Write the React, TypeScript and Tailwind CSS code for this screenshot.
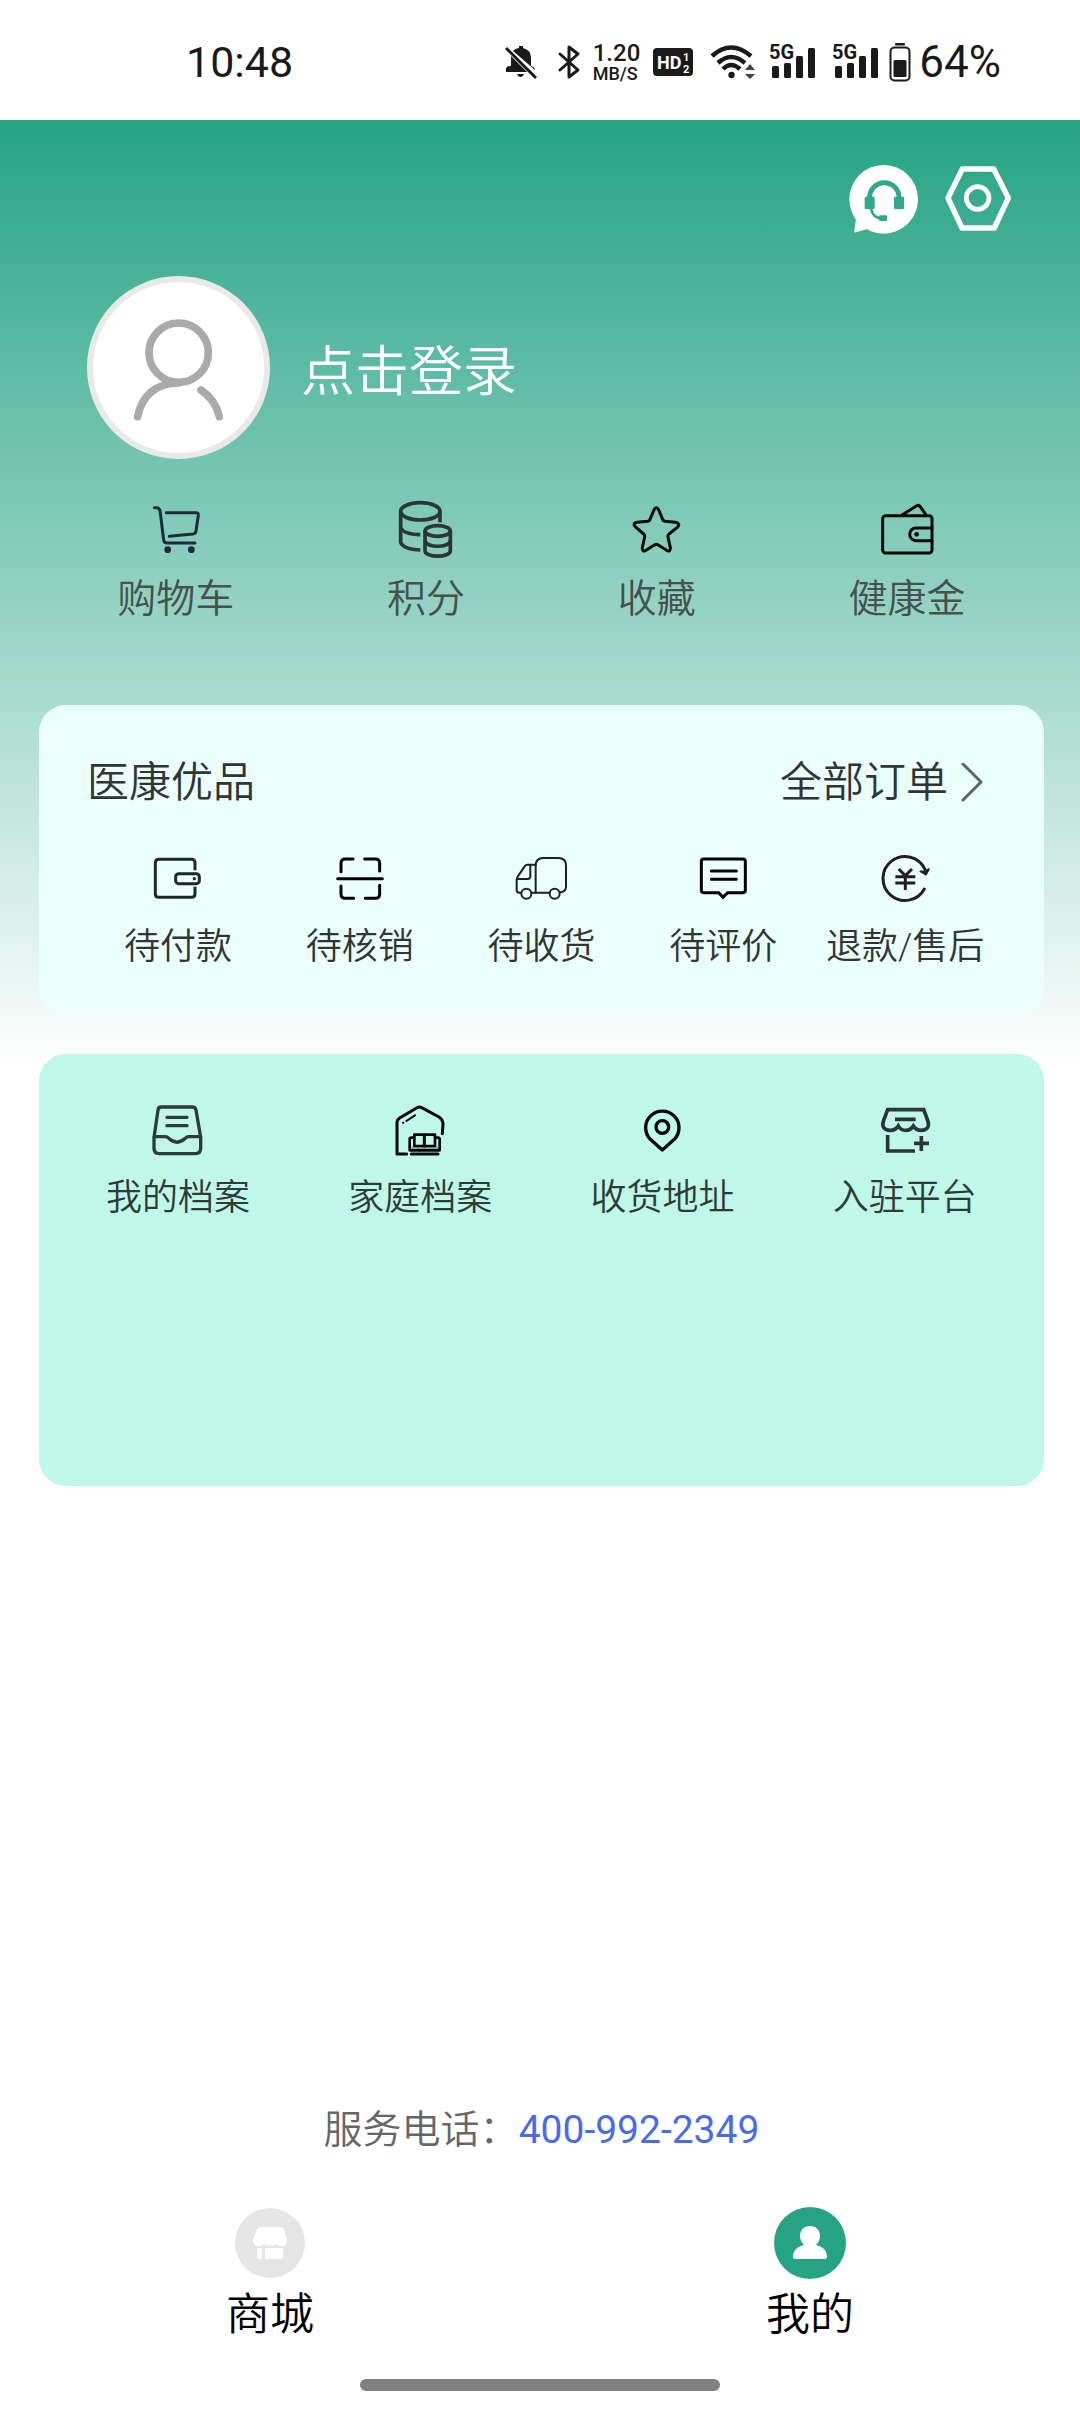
import type { ReactNode } from "react";

type Item = { label: string; icon: ReactNode };

/* ---------- status bar ---------- */

function Signal() {
  return (
    <svg className="h-12 w-[46px] shrink-0" viewBox="0 -6 46 48" fill="#1a1a1a">
      <text x="0" y="15" fontSize="20" fontWeight="700" fontFamily="Roboto, sans-serif">5G</text>
      <rect x="3" y="22" width="7" height="12" rx="1.5" />
      <rect x="15" y="19" width="7" height="15" rx="1.5" />
      <rect x="27" y="12" width="7" height="22" rx="1.5" />
      <rect x="39" y="4" width="7" height="30" rx="1.5" />
    </svg>
  );
}

function StatusBar() {
  return (
    <header className="flex h-[120px] items-center justify-between bg-white pt-1 pr-[79px] pl-[186px] text-[#1a1a1a]">
      <time className="text-[43px] leading-[60px]">10:48</time>
      <div className="flex items-center">
        <svg className="h-9 w-9" viewBox="0 0 36 36" fill="#1a1a1a">
          <path d="M8 12 L24 28 H3 V25 Q3 22 8 22 Z" />
          <path d="M10 7 Q13 4 16 4 V2 H20 V4 Q28 6 28 14 V22 Q32 23 32 26 Z" />
          <path d="M14 30 h7 q-1 3-3.500 3 t-3.500-3z" />
          <path d="M3 4 L33 34" stroke="#1a1a1a" strokeWidth="3" />
        </svg>
        <svg className="ml-[17px] h-9 w-[26px]" viewBox="0 0 26 36" fill="none" stroke="#1a1a1a" strokeWidth="3" strokeLinejoin="round" strokeLinecap="round">
          <path d="M4 10 L22 26 L13 33 V3 L22 10 L4 26" />
        </svg>
        <div className="ml-[11px] flex flex-col font-medium">
          <span className="text-[24px] leading-[24px]">1.20</span>
          <span className="text-[18px] leading-[18px]">MB/S</span>
        </div>
        <svg className="ml-[13px] h-7 w-10" viewBox="0 0 40 28" fontFamily="Roboto, sans-serif" fontWeight="700" fill="#fff">
          <rect width="40" height="28" rx="4" fill="#1a1a1a" />
          <text x="4" y="21" fontSize="18">HD</text>
          <text x="30" y="13" fontSize="11">1</text>
          <text x="30" y="25" fontSize="11">2</text>
        </svg>
        <svg className="ml-[17px] h-9 w-[46px]" viewBox="0 0 46 36" fill="none" stroke="#1a1a1a" strokeWidth="4.500">
          <path d="M2 12 Q21 -5 41 12" />
          <path d="M8 19 Q21 7 35 19" />
          <path d="M13 25 Q21 17 30 25" />
          <circle cx="21.500" cy="31" r="3.200" fill="#1a1a1a" stroke="none" />
          <path d="M35 26 L40 20 L45 26Z M35 30 H45 L40 35Z" fill="#444" stroke="none" />
        </svg>
        <div className="ml-[13px] flex gap-[17px]">
          <Signal />
          <Signal />
        </div>
        <svg className="ml-[11px] h-10 w-[22px]" viewBox="0 0 22 40">
          <rect x="6" y="1" width="10" height="2.500" rx="1" fill="#1a1a1a" />
          <rect x="1.500" y="5.500" width="19" height="33" rx="4" fill="none" stroke="#1a1a1a" strokeWidth="2" />
          <rect x="4.500" y="18" width="13" height="17" rx="1.500" fill="#1a1a1a" />
        </svg>
        <span className="ml-2 text-[44px] leading-[60px]">64%</span>
      </div>
    </header>
  );
}

/* ---------- line icons, drawn on a 180-unit square ---------- */

function LineIcon({ viewBox, color, width, children }: { viewBox: string; color: string; width: number; children: ReactNode }) {
  return (
    <svg className="size-[60px]" viewBox={viewBox} fill="none" stroke={color} strokeWidth={width} strokeLinecap="round" strokeLinejoin="round">
      {children}
    </svg>
  );
}

const shortcuts: Item[] = [
  {
    label: "购物车",
    icon: (
      <LineIcon viewBox="136 60 180 180" color="#1f2b38" width={9}>
        <path d="M161 83 h6 q9 0 11 9 L189 180 q1 9 10 9 H283" />
        <path d="M197 98 H286 q8 0 7 8 L286 153 q-1 8-9 9 L206 169" />
        <circle cx="201" cy="209" r="10" fill="#1f2b38" stroke="none" />
        <circle cx="272" cy="209" r="10" fill="#1f2b38" stroke="none" />
      </LineIcon>
    ),
  },
  {
    label: "积分",
    icon: (
      <LineIcon viewBox="888 60 180 180" color="#2c3634" width={11}>
        <g strokeLinecap="butt">
          <ellipse cx="961" cy="94" rx="59" ry="26" />
          <path d="M902 94 V187 Q910 208 961 210" />
          <path d="M902 144 Q912 163 961 164" />
          <path d="M1020 94 V127" />
          <ellipse cx="1013" cy="153" rx="38" ry="16" />
          <path d="M975 153 V212 C975 234 1051 234 1051 212 V153" />
          <path d="M975 183 C980 204 1046 204 1051 183" />
        </g>
      </LineIcon>
    ),
  },
  {
    label: "收藏",
    icon: (
      <LineIcon viewBox="201 60 180 180" color="#050a08" width={9}>
        <path d="M281 92 Q289 75 297 92 L308 118 Q310 123 315 124 L346 127 Q363 130 352 142 L327 162 Q323 166 324 171 L331 203 Q332 217 320 211 L296 196 Q289 190 282 196 L258 211 Q246 217 247 203 L254 171 Q255 166 251 162 L228 142 Q215 130 232 127 L263 124 Q268 123 270 118 Z" />
      </LineIcon>
    ),
  },
  {
    label: "健康金",
    icon: (
      <LineIcon viewBox="952 60 180 180" color="#050a08" width={9}>
        <rect x="969" y="107" width="148" height="112" rx="9" />
        <path d="M1027 105 L1070 78 q6-4 11 1 L1098 103" />
        <path d="M1117 144 H1069 a19 19 0 0 0 0 38 H1117" />
        <circle cx="1071" cy="163" r="7" fill="#050a08" stroke="none" />
      </LineIcon>
    ),
  },
];

const orders: Item[] = [
  {
    label: "待付款",
    icon: (
      <LineIcon viewBox="354 477 180 180" color="#222725" width={9}>
        <path d="M495 541 V519 q0-11-11-11 H387 q-11 0-11 11 V611 q0 11 11 11 H484 q11 0 11-11 V590" strokeLinecap="butt" />
        <rect x="437" y="551" width="71" height="30" rx="9" />
        <circle cx="493" cy="566" r="5" fill="#222725" stroke="none" />
      </LineIcon>
    ),
  },
  {
    label: "待核销",
    icon: (
      <LineIcon viewBox="899 477 180 180" color="#000" width={9}>
        <path d="M932 545 V520 q0-13 13-13 H968 M1003 507 H1035 q13 0 13 13 V543 M932 588 V612 q0 13 13 13 H970 M1005 625 H1035 q13 0 13-13 V586 M922 566 H1056" />
      </LineIcon>
    ),
  },
  {
    label: "待收货",
    icon: (
      <LineIcon viewBox="1444 477 180 180" color="#1c201f" width={6}>
        <path d="M1518 524 H1494 q-6 0-9 5 L1464 560 q-3 5-3 10 V600 q0 8 8 8 H1474" />
        <path d="M1464 567 H1494 q8 0 8-8 V526" />
        <path d="M1518 608 V527 q0-23 23-23 H1586 q23 0 23 23 V590 q0 14-16 17" />
        <path d="M1506 608 H1559" />
        <circle cx="1490" cy="611" r="15" />
        <circle cx="1575" cy="611" r="15" />
      </LineIcon>
    ),
  },
  {
    label: "待评价",
    icon: (
      <LineIcon viewBox="460 477 180 180" color="#000" width={9}>
        <path d="M492 507 H610 q7 0 7 7 V601 q0 7-7 7 H564 L550 622 L537 608 H492 q-7 0-7-7 V514 q0-7 7-7z" strokeLinejoin="miter" />
        <path d="M515 543 H590 M515 568 H590" />
      </LineIcon>
    ),
  },
  {
    label: "退款/售后",
    icon: (
      <LineIcon viewBox="1005 477 180 180" color="#231f20" width={9}>
        <path d="M1153 597 A66 66 0 1 1 1155 538" />
        <path d="M1141 544 L1158 554 L1167 537 L1156 543 Z" fill="#231f20" strokeWidth="5" />
        <g strokeLinecap="butt">
          <path d="M1076 537 L1096 557 L1116 537 M1096 557 V600 M1066 560 H1126 M1066 579 H1126" />
        </g>
      </LineIcon>
    ),
  },
];

const services: Item[] = [
  {
    label: "我的档案",
    icon: (
      <LineIcon viewBox="354 180 180 180" color="#2f3b38" width={10}>
        <path d="M394 201 H487 q9 0 11 9 L512 292 V325 q0 16-16 16 H388 q-16 0-16-16 V293 L384 210 q1-9 10-9z" />
        <path d="M373 290 H406 q6 0 10 5 q25 23 50 0 q4-5 10-5 H512" />
        <path d="M411 232 H471 M411 257 H471" />
      </LineIcon>
    ),
  },
  {
    label: "家庭档案",
    icon: (
      <LineIcon viewBox="1082 180 180 180" color="#020806" width={9}>
        <path d="M1132 342 H1103 V248 q0-9 8-14 L1163 203 q7-4 14 0 L1229 231 q12 8 12 22 L1239 281" />
        <path d="M1131 243 L1157 226 M1121 248 h1" strokeWidth="6" />
        <path d="M1150 323 H1222" stroke="#8ea9a1" />
        <rect x="1155" y="284" width="62" height="34" strokeWidth="8" />
        <path d="M1185 284 V318" />
        <path d="M1155 293 H1146 q-5 0-5 5 V331 H1231 V298 q0-5-5-5 H1217" strokeWidth="8" />
        <path d="M1146 342 H1226" />
      </LineIcon>
    ),
  },
  {
    label: "收货地址",
    icon: (
      <LineIcon viewBox="279 180 180 180" color="#020806" width={10}>
        <path d="M367 330 L331 298 A50 50 0 1 1 403 298 Z" />
        <circle cx="367" cy="261" r="19" />
      </LineIcon>
    ),
  },
  {
    label: "入驻平台",
    icon: (
      <LineIcon viewBox="1005 180 180 180" color="#2b3634" width={11}>
        <g strokeLinecap="butt" strokeLinejoin="miter">
          <path d="M1043 209 L1031 241 C1024 262 1034 271 1050 271 Q1067 271 1075 258 Q1082 271 1097 271 Q1112 271 1120 258 Q1128 271 1144 271 C1160 271 1170 262 1163 241 L1151 209 Z" />
          <path d="M1065 238 H1127 M1043 285 V333 H1125 M1144 288 V333 M1122 310 H1167" />
        </g>
      </LineIcon>
    ),
  },
];

function IconButton({ item, className }: { item: Item; className: string }) {
  return (
    <button type="button" className={"flex flex-col items-center whitespace-nowrap " + className}>
      {item.icon}
      <span>{item.label}</span>
    </button>
  );
}

/* ---------- page ---------- */

export default function App() {
  return (
    <div className="flex min-h-screen flex-col bg-white font-['Roboto','Noto_Sans_CJK_SC',sans-serif]">
      <StatusBar />
      <main className="flex grow flex-col bg-[linear-gradient(#25a385,#fff_950px)] pr-9 pl-[39px] font-[350]">
        <div className="flex items-start justify-end gap-[27px] pt-[45px] pr-[33px]">
          <button type="button" aria-label="客服">
            <svg className="size-[69px]" viewBox="87 75 207 207">
              <circle cx="191" cy="178" r="103" fill="#fff" />
              <path d="M108 235 L103 274 Q103 279 108 277 L145 266 Z" fill="#fff" />
              <g fill="none" stroke="#31a88c">
                <path d="M149 178 V172 a44 44 0 0 1 88 0 V178" strokeWidth="15" />
                <path d="M153 205 Q158 235 185 235" strokeWidth="8" />
              </g>
              <g fill="#31a88c">
                <rect x="134" y="170" width="30" height="37" rx="3" />
                <rect x="222" y="170" width="30" height="37" rx="3" />
                <rect x="177" y="226" width="24" height="17" rx="3" />
              </g>
            </svg>
          </button>
          <button type="button" aria-label="设置">
            <svg className="size-[66px]" viewBox="375 72 198 198" fill="none" stroke="#fff">
              <path d="M427 84 H521 L565 171 L523 261 H426 L384 171 Z" strokeWidth="16" strokeLinejoin="round" />
              <circle cx="473" cy="171" r="34" strokeWidth="14" />
            </svg>
          </button>
        </div>

        <button type="button" className="mt-[42px] ml-12 flex items-center gap-[31px] self-start text-white">
          <span className="block size-[183px] rounded-full border-6 border-[#e9e9e9] bg-white">
            <svg className="size-full" viewBox="69 66 513 513" fill="none" stroke="#aaa" strokeWidth="23" strokeLinecap="round">
              <circle cx="326" cy="278" r="89" />
              <path d="M203 470 C215 405 260 369 326 369" />
              <path d="M393 390 Q437 420 448 470" />
            </svg>
          </span>
          <span className="pt-2.5 text-[54px] leading-[72px]">点击登录</span>
        </button>

        <nav className="mt-[41px] flex justify-around px-0.5">
          {shortcuts.map((item) => (
            <IconButton key={item.label} item={item} className="gap-3 text-[39px] leading-[54px] text-[#46504d]" />
          ))}
        </nav>

        <section className="mt-[79px] rounded-[27px] bg-[#eafffb] px-12 pt-12 pb-11 text-[#303534]">
          <div className="flex justify-between text-[42px] leading-[60px]">
            <h2>医康优品</h2>
            <a href="#orders" className="flex items-center gap-3 pr-3">
              全部订单
              <svg className="h-10 w-6" viewBox="0 0 24 40" fill="none" stroke="#5c6563" strokeWidth="3" strokeLinecap="round" strokeLinejoin="round">
                <path d="M3 1 L21 19 L3 37" />
              </svg>
            </a>
          </div>
          <div className="mt-9 grid grid-cols-5">
            {orders.map((item) => (
              <IconButton key={item.label} item={item} className="gap-3.5 text-[36px] leading-[48px]" />
            ))}
          </div>
        </section>

        <section className="mt-[39px] min-h-[432px] rounded-[27px] bg-[#bff8e9] px-[18px] pt-[46px]">
          <div className="grid grid-cols-4">
            {services.map((item) => (
              <IconButton key={item.label} item={item} className="gap-3.5 text-[36px] leading-[48px] text-[#2f3b38]" />
            ))}
          </div>
        </section>

        <p className="mt-auto text-center text-[39px] leading-[54px] text-[#666]">
          服务电话：
          <a href="tel:400-992-2349" className="font-normal text-[#4a6be8]">400-992-2349</a>
        </p>
      </main>

      <footer className="pt-[50px] pb-[21px] font-[350] text-black">
        <nav className="grid grid-cols-2 text-[44px] leading-[60px]">
          <button type="button" className="flex flex-col items-center gap-1.5">
            <svg className="size-[72px]" viewBox="0 0 72 72">
              <circle cx="36" cy="36" r="35" fill="#e5e5e5" />
              <g fill="#fff">
                <path d="M27 20 H47 Q49 20 50 22 L53 33 Q53 38 49 39 Q45 40 42 37 Q39 40 36 38 Q33 40 30 37 Q27 40 23 39 Q19 38 19 33 L23 22 Q24 20 27 20 Z" />
                <path d="M23 41 H28 V52 H25 Q23 52 23 50 Z M31 41 H49 V50 Q49 52 47 52 H31 Z" />
              </g>
            </svg>
            商城
          </button>
          <button type="button" aria-current="page" className="flex flex-col items-center gap-1.5">
            <svg className="size-[72px]" viewBox="0 0 72 72">
              <circle cx="36" cy="36" r="36" fill="#26a385" />
              <path d="M36 19 C42 19 46 23 46 29 C46 33 44 36 42 38 C49 40 53 43 53 50 Q53 52 51 52 H21 Q19 52 19 50 C19 43 23 40 30 38 C28 36 26 33 26 29 C26 23 30 19 36 19 Z" fill="#fff" />
            </svg>
            我的
          </button>
        </nav>
        <div className="mx-auto mt-[34px] h-3 w-1/3 rounded-full bg-[#808080]" />
      </footer>
    </div>
  );
}
